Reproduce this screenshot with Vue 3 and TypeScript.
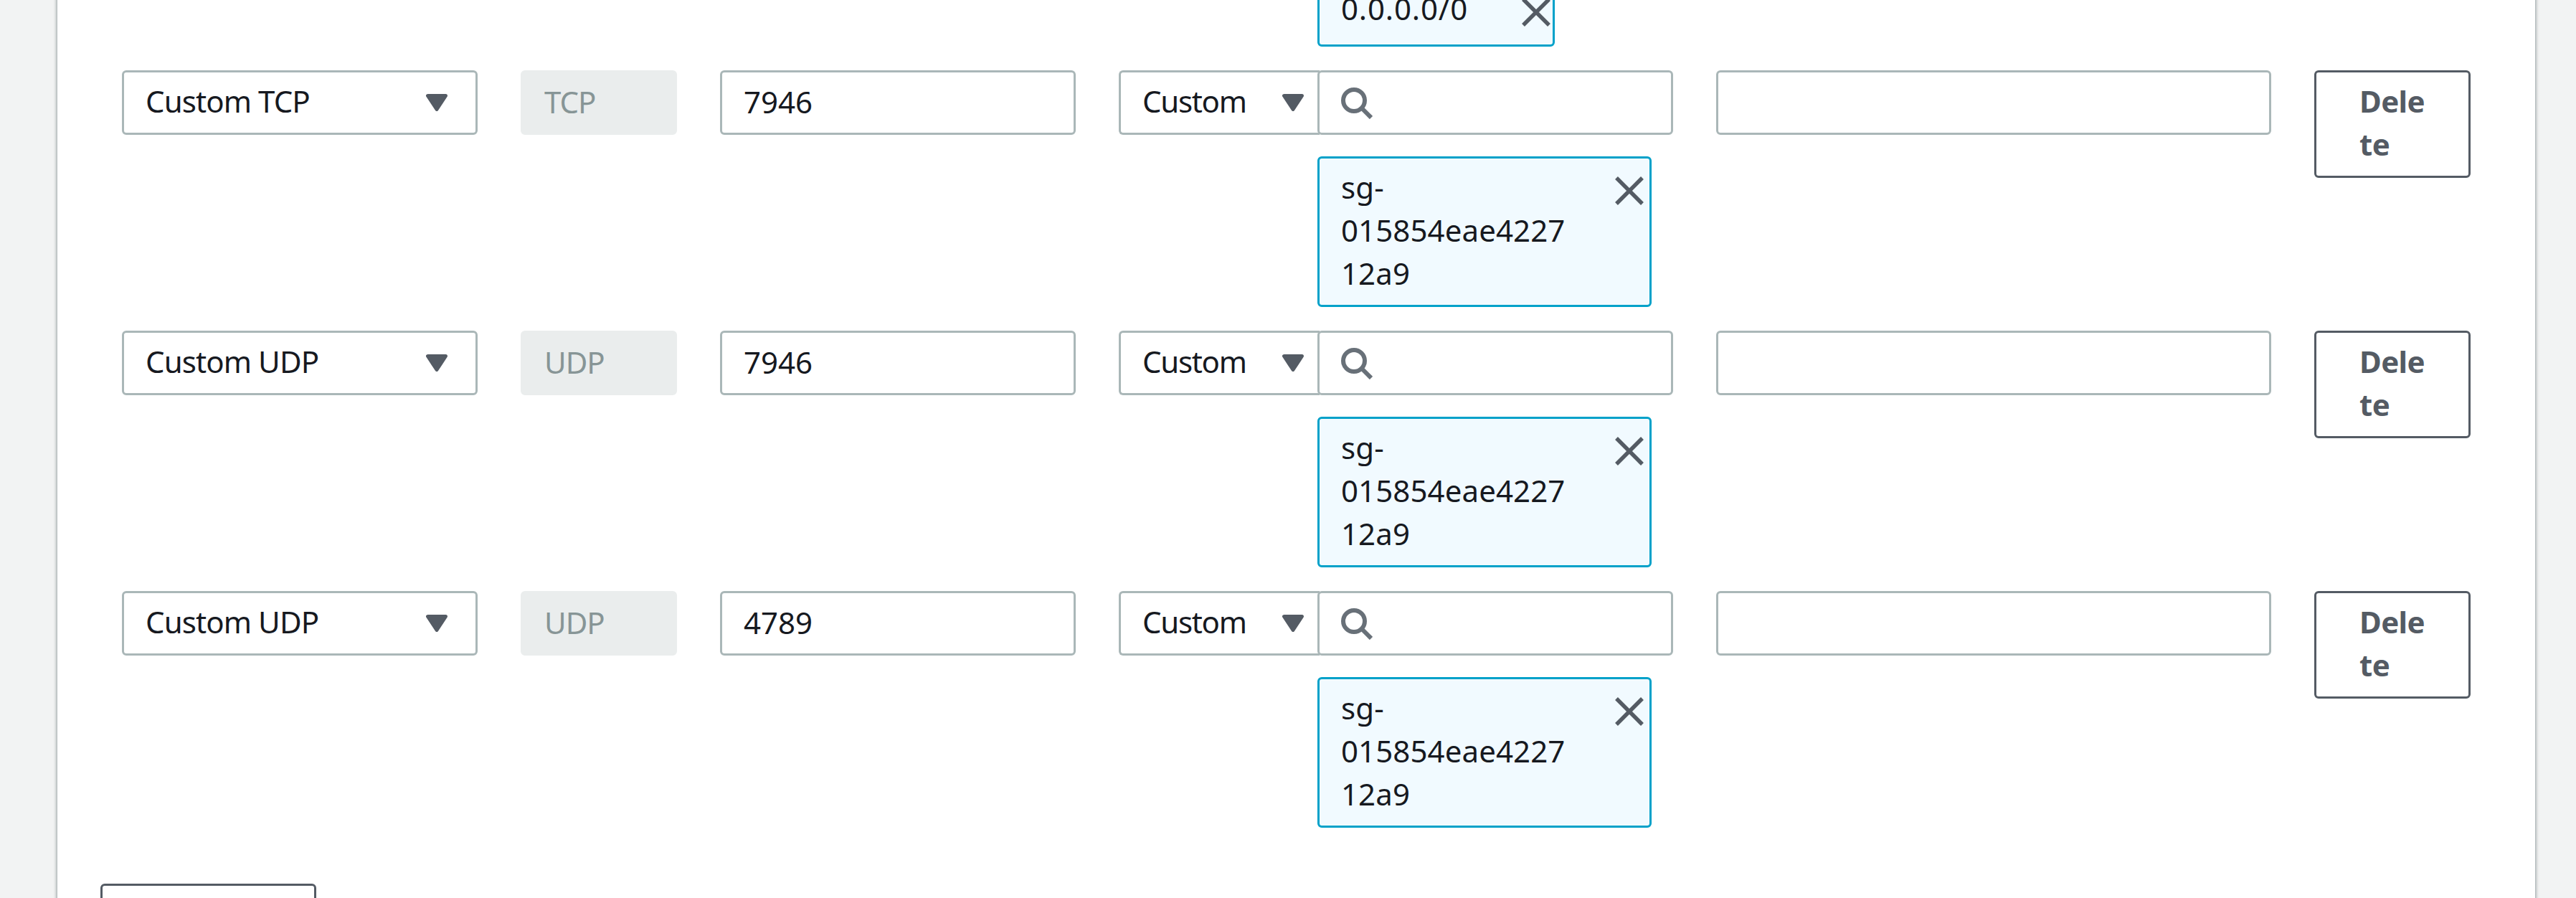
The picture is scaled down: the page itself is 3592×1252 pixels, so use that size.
<script setup lang="ts">
interface Rule {
  type: string
  protocol: string
  port: string
  group: string[]
}

const group = ['sg-', '015854eae4227', '12a9']

const rules: Rule[] = [
  { type: 'Custom TCP', protocol: 'TCP', port: '7946', group },
  { type: 'Custom UDP', protocol: 'UDP', port: '7946', group },
  { type: 'Custom UDP', protocol: 'UDP', port: '4789', group },
]
</script>

<template>
  <div class="page">
    <main class="panel">
      <div class="cidr-row">
        <div class="token token-short">
          <span class="token-text">0.0.0.0/0</span>
          <svg class="close" viewBox="0 0 40 40"><path d="M2 2 38 38M38 2 2 38" /></svg>
        </div>
      </div>

      <div v-for="(rule, i) in rules" :key="i" class="rule">
        <div class="box select type">
          <span>{{ rule.type }}</span>
          <svg class="caret" viewBox="0 0 30 24"><path d="M2.5 2.5H27.5L15 21.5Z" /></svg>
        </div>
        <div class="box disabled">{{ rule.protocol }}</div>
        <div class="box port">{{ rule.port }}</div>
        <div class="source">
          <div class="box select mode">
            <span>Custom</span>
            <svg class="caret" viewBox="0 0 30 24"><path d="M2.5 2.5H27.5L15 21.5Z" /></svg>
          </div>
          <div class="lookup">
            <div class="box search">
              <svg class="glass" viewBox="0 0 44 44">
                <circle cx="18" cy="18" r="15" />
                <path d="M28.5 28.5 42 42" />
              </svg>
            </div>
            <div class="token">
              <span class="token-text">
                <span v-for="line in rule.group" :key="line" class="line">{{ line }}</span>
              </span>
              <svg class="close" viewBox="0 0 40 40"><path d="M2 2 38 38M38 2 2 38" /></svg>
            </div>
          </div>
        </div>
        <div class="box description"></div>
        <button class="delete"><span class="line">Dele</span><span class="line">te</span></button>
      </div>

      <div class="add"></div>
    </main>
  </div>
</template>

<style>
body {
  margin: 0;
  background: #f2f3f3;
}
</style>

<style scoped>
.page {
  height: 1252px;
  overflow: hidden;
  background: #f2f3f3;
  color: #16191f;
  font: 42px/60px "Noto Sans", "Open Sans", sans-serif;
}
.page * {
  box-sizing: border-box;
}
.panel {
  height: 1340px;
  margin: -40px 57px 0 80px;
  padding: 9px 90px 0;
  background: #fff;
  box-shadow:
    0 3px 3px rgba(0, 28, 36, 0.3),
    3px 3px 3px rgba(0, 28, 36, 0.15),
    -3px 3px 3px rgba(0, 28, 36, 0.15);
}
.cidr-row {
  padding-left: 1667px;
  margin-bottom: 33px;
}
.rule {
  display: flex;
  align-items: flex-start;
  gap: 60px;
  margin-bottom: 33px;
}
.box {
  height: 90px;
  padding: 11px 30px 13px;
  border: 3px solid #aab7b8;
  border-radius: 6px;
  background: #fff;
  white-space: nowrap;
}
.select {
  display: flex;
  justify-content: space-between;
  align-items: flex-start;
  padding-top: 10px;
}
.type {
  width: 496px;
  padding-right: 39px;
  letter-spacing: -0.9px;
}
.caret {
  width: 30px;
  height: 24px;
  margin-top: 20px;
  fill: #545b64;
  stroke: #545b64;
  stroke-width: 5px;
  stroke-linejoin: round;
}
.disabled {
  width: 218px;
  border-color: #eaeded;
  background: #eaeded;
  color: #879596;
  letter-spacing: -1px;
}
.port {
  width: 496px;
}
.source {
  display: flex;
  width: 773px;
}
.mode {
  width: 280px;
  margin-right: -3px;
  padding-right: 22px;
  border-right: 0;
  border-radius: 6px 0 0 6px;
  letter-spacing: -1.3px;
}
.lookup {
  width: 496px;
}
.search {
  padding-top: 21px;
}
.glass {
  display: block;
  width: 44px;
  height: 44px;
  fill: none;
  stroke: #687078;
  stroke-width: 6px;
}
.token {
  display: flex;
  justify-content: space-between;
  align-items: flex-start;
  width: 466px;
  height: 210px;
  margin-top: 30px;
  padding: 10px 8px 0 30px;
  border: 3px solid #00a1c9;
  border-radius: 6px;
  background: #f1faff;
  letter-spacing: 0.1px;
}
.token-short {
  width: 331px;
  height: 96px;
  margin-top: 0;
  padding-right: 3px;
  letter-spacing: 0.85px;
}
.close {
  width: 40px;
  height: 40px;
  margin-top: 15px;
  fill: none;
  stroke: #545b64;
  stroke-width: 5.5px;
}
.line {
  display: block;
}
.description {
  width: 774px;
}
.delete {
  display: flex;
  flex-direction: column;
  width: 218px;
  height: 150px;
  padding: 10px 0 0 60px;
  border: 3px solid #545b64;
  border-radius: 6px;
  background: #fff;
  color: #545b64;
  font: inherit;
  font-weight: 700;
  letter-spacing: -0.6px;
  text-align: left;
}
.add {
  width: 301px;
  height: 90px;
  margin: 78px 0 0 -30px;
  border: 3px solid #545b64;
  border-radius: 6px;
}
</style>
